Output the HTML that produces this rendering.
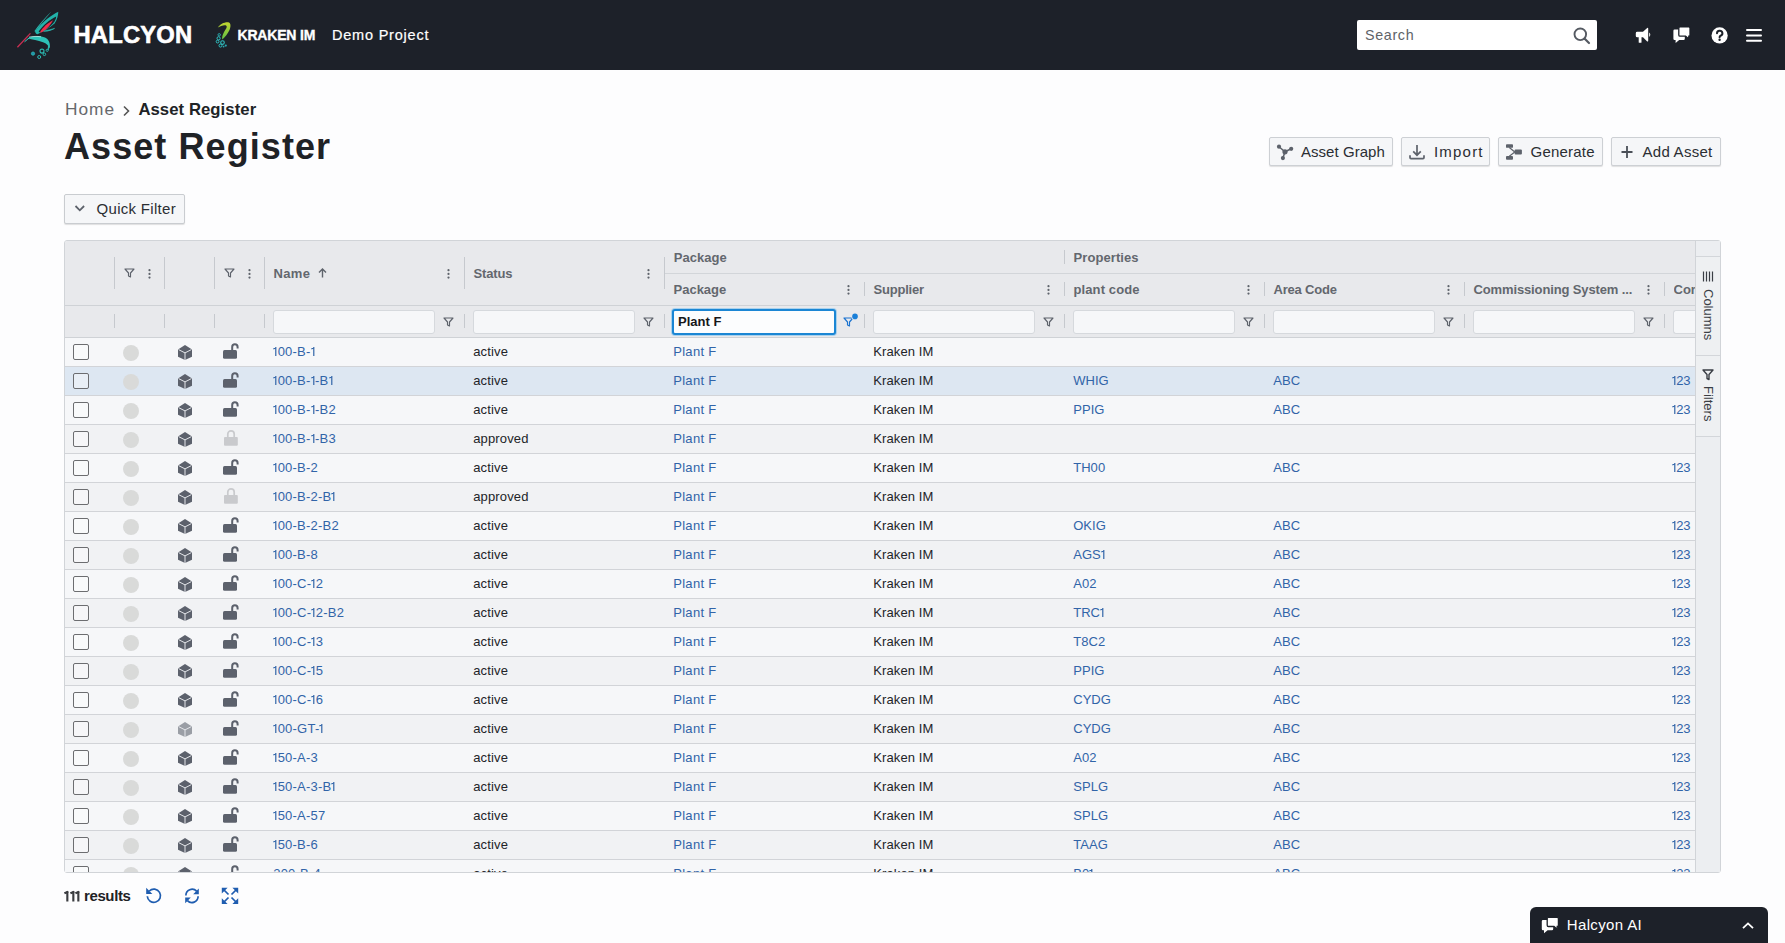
<!DOCTYPE html>
<html><head><meta charset="utf-8"><title>Asset Register</title>
<style>
html,body{margin:0;padding:0;}
body{width:1785px;height:943px;overflow:hidden;position:relative;background:#fdfdfe;font-family:"Liberation Sans", sans-serif;}
.r{position:absolute;display:block;}
.t{position:absolute;white-space:nowrap;}
svg.r{overflow:visible}
.o1{display:inline-block;height:0.7em;vertical-align:baseline;overflow:visible}
</style></head><body>
<div class="r" style="left:0px;top:0px;width:1785px;height:70px;background:#1d2129"></div>
<svg class="r" style="left:0px;top:0px;" width="70" height="70" viewBox="0 0 70 70">
<path d="M51.6 11.2 C46 17 39 24 34.3 31.2 L35.3 31.6 C39.5 25 46 18 51.6 11.2Z" fill="#2bb8b0"/>
<path d="M58.3 11.8 C52 14.5 42 22 35 31.5 C35.6 33.5 36.5 34.3 37.5 34.2 C44 31 50 27.5 54.5 23.5 C57 20 58.2 15.5 58.3 11.8Z" fill="#22b3aa"/>
<path d="M56.2 16.5 C50 19.5 43 25 38.6 31.6 C39.5 32.6 40.5 32.8 41.5 32.3 C46 29.6 50.5 26.5 53.4 23 C55 21 56 18.8 56.2 16.5Z" fill="#1d2129"/>
<path d="M53 20.2 C47.5 23 42.5 27.5 40 32.2 C41.2 32.6 42.2 32.3 43.2 31.6 C47.2 28.5 50.8 25 53 20.2Z" fill="#ee2f4b"/>
<path d="M54.6 28.4 C51 29.6 47 30.2 43.5 31.2 C47 31.4 51 30.6 54.6 28.4Z" fill="#2bb8b0" stroke="#2bb8b0" stroke-width="0.6"/>
<path d="M27.5 38.3 C33 35.8 40 35.5 45 37.6 C48.5 39.2 50.6 43 49.8 48.8 C48.6 45.5 46.5 43.5 43 42.2 C38 40.6 32 39.5 27.5 38.3Z" fill="#2ec2b8"/>
<path d="M29 37.2 C33 36.3 37 36.2 41 36.8" fill="none" stroke="#bff2ee" stroke-width="0.8"/>
<path d="M17.4 47.2 L30.4 33.4" stroke="#c72f52" stroke-width="1.3"/>
<path d="M24.5 41.8 L30 37.2" stroke="#3fc9c0" stroke-width="1"/>
<circle cx="33" cy="53.6" r="1.6" fill="#1f8fb0" stroke="#2bb8b0" stroke-width="0.9"/>
<circle cx="42" cy="51.1" r="2" fill="none" stroke="#2bb8b0" stroke-width="1.1"/>
<circle cx="44.4" cy="54.3" r="1.3" fill="none" stroke="#2bb8b0" stroke-width="1"/>
<circle cx="39.2" cy="57" r="1.5" fill="none" stroke="#2bb8b0" stroke-width="1"/>
<circle cx="47.2" cy="50.3" r="1.1" fill="none" stroke="#2bb8b0" stroke-width="0.9"/>
<path d="M48.6 46 L48.2 50" stroke="#2bb8b0" stroke-width="1.2"/>
</svg>
<div class="t" id="halcyon" style="left:73.50px;top:23.15px;font-size:23.8px;line-height:23.8px;font-weight:700;color:#ffffff;letter-spacing:0.167px;-webkit-text-stroke:0.6px #fff;">HALCYON</div>
<svg class="r" style="left:0px;top:0px;" width="240" height="60" viewBox="0 0 240 60">
<defs><linearGradient id="kg" x1="0" y1="0" x2="0" y2="1"><stop offset="0" stop-color="#c2d530"/><stop offset="1" stop-color="#5fbf45"/></linearGradient></defs>
<path d="M217.8 27.6 C220 24 225 21.6 229 22.4 C231 23.5 230.8 27 229.5 30 C228 33.5 225 37 222.3 39.5 C221.6 36.5 223.5 32.5 226.2 28.5 C227 27 227 25.5 225.5 25.2 C223 25 220 26 217.8 27.6Z" fill="url(#kg)"/>
<circle cx="219.2" cy="34.8" r="1.2" fill="none" stroke="#29b3b8" stroke-width="0.9"/>
<circle cx="218.6" cy="38.3" r="1.6" fill="none" stroke="#2fbfc0" stroke-width="1"/>
<circle cx="217.6" cy="41.6" r="1.4" fill="none" stroke="#2fbfc0" stroke-width="1"/>
<circle cx="222.5" cy="42.6" r="1.8" fill="none" stroke="#2fbfc0" stroke-width="1.1"/>
<circle cx="220.5" cy="45.6" r="1.5" fill="none" stroke="#2fbfc0" stroke-width="1"/>
<circle cx="225.8" cy="45.6" r="1.1" fill="#2aa7b0"/>
<circle cx="223.6" cy="46.6" r="0.9" fill="#2aa7b0"/>
</svg>
<div class="t" id="kraken" style="left:237.50px;top:28.05px;font-size:14px;line-height:14px;font-weight:700;color:#ffffff;letter-spacing:-0.188px;-webkit-text-stroke:0.35px #fff;">KRAKEN IM</div>
<div class="t" id="demo" style="left:332.00px;top:27.63px;font-size:14.5px;line-height:14.5px;font-weight:400;color:#ffffff;letter-spacing:0.791px;-webkit-text-stroke:0.2px #fff;">Demo Project</div>
<div class="r" style="left:1357px;top:20px;width:240px;height:30px;background:#fff;border-radius:2px"></div>
<div class="t" id="search" style="left:1365.00px;top:27.70px;font-size:14.3px;line-height:14.3px;font-weight:400;color:#606368;letter-spacing:0.660px;">Search</div>
<svg class="r" style="left:1573px;top:27px;" width="18" height="17" viewBox="0 0 18 17"><circle cx="7.3" cy="7.3" r="5.8" fill="none" stroke="#555a62" stroke-width="1.9"/><path d="M11.5 11.5 L16 16" stroke="#555a62" stroke-width="2.2" stroke-linecap="round"/></svg>
<svg class="r" style="left:0px;top:0px;" width="1785" height="70" viewBox="0 0 1785 70"><path d="M1637.2 31.8 H1643 L1647.2 27.9 Q1648.2 27.5 1648.2 28.6 V40.8 Q1648.2 41.9 1647.2 41.4 L1643 37.3 H1641.5 V42.2 Q1641.5 42.8 1640.9 42.8 H1639.3 Q1638.7 42.8 1638.7 42.2 V37.3 H1637.2 Q1635.8 37.3 1635.8 35.9 V33.2 Q1635.8 31.8 1637.2 31.8Z" fill="#fff"/>
<path d="M1649.2 32.6 Q1651.4 34.7 1649.2 36.9Z" fill="#fff"/>
<path d="M1674.6 29.6 H1683.6 Q1684.8 29.6 1684.8 30.8 V38.7 Q1684.8 39.9 1683.6 39.9 H1679.2 L1675.6 42.9 V39.9 H1674.6 Q1673.4 39.9 1673.4 38.7 V30.8 Q1673.4 29.6 1674.6 29.6Z" fill="#fff"/>
<path d="M1680 26.9 H1688.8 Q1690 26.9 1690 28.1 V34.9 Q1690 36.1 1688.8 36.1 V38.9 L1685.6 36.1 H1680 Q1678.8 36.1 1678.8 34.9 V28.1 Q1678.8 26.9 1680 26.9Z" fill="#fff" stroke="#1d2129" stroke-width="1.3"/>
</svg>
<svg class="r" style="left:1711px;top:27px;" width="18" height="17" viewBox="0 0 18 17"><circle cx="8.6" cy="8.4" r="8.1" fill="#fff"/><path d="M6 6.3 a2.7 2.5 0 1 1 3.6 2.4 c-0.8 0.35 -1 0.8 -1 1.6" fill="none" stroke="#1d2129" stroke-width="2" stroke-linecap="round"/><circle cx="8.6" cy="12.7" r="1.2" fill="#1d2129"/></svg>
<svg class="r" style="left:1745px;top:28px;" width="18" height="15" viewBox="0 0 18 15"><rect x="1" y="1" width="16" height="2" rx="1" fill="#fff"/><rect x="1" y="6.4" width="16" height="2" rx="1" fill="#fff"/><rect x="1" y="11.8" width="16" height="2" rx="1" fill="#fff"/></svg>
<div class="t" id="home" style="left:65.00px;top:101.26px;font-size:17.3px;line-height:17.3px;font-weight:400;color:#65686c;letter-spacing:1.000px;">Home</div>
<svg class="r" style="left:121px;top:105px;" width="10" height="12" viewBox="0 0 10 12"><path d="M3 1.5 L7.5 6 L3 10.5" fill="none" stroke="#555" stroke-width="1.6"/></svg>
<div class="t" id="bcar" style="left:138.40px;top:101.76px;font-size:16.7px;line-height:16.7px;font-weight:700;color:#202326;letter-spacing:0.069px;">Asset Register</div>
<div class="t" id="title" style="left:64.00px;top:128.83px;font-size:36px;line-height:36px;font-weight:700;color:#1f2226;letter-spacing:1.077px;">Asset Register</div>
<div class="r" style="left:1269px;top:137px;width:124px;height:29px;background:#f5f6f8;border:1px solid #cdd0d4;border-radius:2px;box-shadow:0 1px 1px rgba(0,0,0,0.12);box-sizing:border-box"></div>
<svg class="r" style="left:1277px;top:144px;" width="17" height="16" viewBox="0 0 17 16"><g transform="translate(-1277 -144)"><circle cx="1279" cy="146.7" r="2.1" fill="#5d626b"/><circle cx="1291.2" cy="148.8" r="2.1" fill="#5d626b"/><circle cx="1282.9" cy="158.1" r="2.1" fill="#5d626b"/><circle cx="1285" cy="151.8" r="2.6" fill="#5d626b"/><path d="M1279 146.7 L1285 151.8 L1291.2 148.8 M1285 151.8 L1282.9 158.1" fill="none" stroke="#5d626b" stroke-width="1.5"/></g></svg>
<div class="t" id="b1" style="left:1301.00px;top:144.30px;font-size:15px;line-height:15px;font-weight:400;color:#2b2e33;letter-spacing:0.040px;">Asset Graph</div>
<div class="r" style="left:1401px;top:137px;width:89px;height:29px;background:#f5f6f8;border:1px solid #cdd0d4;border-radius:2px;box-shadow:0 1px 1px rgba(0,0,0,0.12);box-sizing:border-box"></div>
<svg class="r" style="left:1409px;top:144px;" width="16" height="16" viewBox="0 0 16 16"><g transform="translate(-1409 -144)"><path d="M1417 145 V155.2 M1413.2 151.4 L1417 155.2 L1420.8 151.4" fill="none" stroke="#5d626b" stroke-width="1.7"/><path d="M1410 155.3 V157.6 Q1410 158.6 1411 158.6 H1423 Q1424 158.6 1424 157.6 V155.3" fill="none" stroke="#5d626b" stroke-width="1.7"/></g></svg>
<div class="t" id="b2" style="left:1434.00px;top:144.30px;font-size:15px;line-height:15px;font-weight:400;color:#2b2e33;letter-spacing:1.200px;">Import</div>
<div class="r" style="left:1498px;top:137px;width:105px;height:29px;background:#f5f6f8;border:1px solid #cdd0d4;border-radius:2px;box-shadow:0 1px 1px rgba(0,0,0,0.12);box-sizing:border-box"></div>
<svg class="r" style="left:1506px;top:144px;" width="16" height="16" viewBox="0 0 16 16"><g transform="translate(-1506 -144)"><rect x="1506" y="144.2" width="7" height="3.6" rx="0.9" fill="#5d626b"/><rect x="1506" y="155.9" width="7" height="3.8" rx="0.9" fill="#5d626b"/><rect x="1514.6" y="149.5" width="7.3" height="5.1" rx="1" fill="#5d626b"/><path d="M1509.3 147.5 L1514.8 152 L1509.3 156.3" fill="none" stroke="#5d626b" stroke-width="1.2"/></g></svg>
<div class="t" id="b3" style="left:1530.60px;top:144.30px;font-size:15px;line-height:15px;font-weight:400;color:#2b2e33;letter-spacing:0.200px;">Generate</div>
<div class="r" style="left:1611px;top:137px;width:110px;height:29px;background:#f5f6f8;border:1px solid #cdd0d4;border-radius:2px;box-shadow:0 1px 1px rgba(0,0,0,0.12);box-sizing:border-box"></div>
<svg class="r" style="left:1621px;top:144px;" width="12" height="16" viewBox="0 0 12 16"><path d="M6 2 V14 M0.5 8 H11.5" stroke="#4a4f57" stroke-width="1.8"/></svg>
<div class="t" id="b4" style="left:1642.60px;top:144.30px;font-size:15px;line-height:15px;font-weight:400;color:#2b2e33;letter-spacing:0.250px;">Add Asset</div>
<div class="r" style="left:64px;top:194px;width:121px;height:30px;background:#f5f6f8;border:1px solid #c9ccd0;border-radius:2px;box-shadow:0 1px 1px rgba(0,0,0,0.12);box-sizing:border-box"></div>
<svg class="r" style="left:74px;top:204px;" width="12" height="9" viewBox="0 0 12 9"><path d="M1.5 2 L5.8 6.3 L10.1 2" fill="none" stroke="#5d626b" stroke-width="1.8"/></svg>
<div class="t" id="qf" style="left:96.60px;top:200.90px;font-size:15px;line-height:15px;font-weight:400;color:#2b2e33;letter-spacing:0.291px;">Quick Filter</div>
<div class="r" style="left:64px;top:240px;width:1657px;height:633px;background:#f4f5f7;border:1px solid #d1d4d8;border-radius:3px;box-sizing:border-box"></div>
<div class="r" style="left:65px;top:241px;width:1630px;height:96px;background:#e8e9ec;border-radius:2px 0 0 0"></div>
<div class="r" style="left:65px;top:305px;width:1630px;height:1px;background:#cfd2d6"></div>
<div class="r" style="left:65px;top:337px;width:1630px;height:1px;background:#cfd2d6"></div>
<div class="r" style="left:664px;top:273px;width:1031px;height:1px;background:#d2d5d9"></div>
<div class="r" style="left:114px;top:257px;width:1px;height:32px;background:#c6c9ce"></div>
<div class="r" style="left:164px;top:257px;width:1px;height:32px;background:#c6c9ce"></div>
<div class="r" style="left:214px;top:257px;width:1px;height:32px;background:#c6c9ce"></div>
<div class="r" style="left:264px;top:257px;width:1px;height:32px;background:#c6c9ce"></div>
<div class="r" style="left:464px;top:257px;width:1px;height:32px;background:#c6c9ce"></div>
<div class="r" style="left:664px;top:257px;width:1px;height:32px;background:#c6c9ce"></div>
<div class="r" style="left:1064px;top:250px;width:1px;height:14px;background:#c6c9ce"></div>
<div class="r" style="left:864px;top:282px;width:1px;height:14px;background:#c6c9ce"></div>
<div class="r" style="left:1064px;top:282px;width:1px;height:14px;background:#c6c9ce"></div>
<div class="r" style="left:1264px;top:282px;width:1px;height:14px;background:#c6c9ce"></div>
<div class="r" style="left:1464px;top:282px;width:1px;height:14px;background:#c6c9ce"></div>
<div class="r" style="left:1664px;top:282px;width:1px;height:14px;background:#c6c9ce"></div>
<div class="r" style="left:114px;top:314px;width:1px;height:14px;background:#c6c9ce"></div>
<div class="r" style="left:164px;top:314px;width:1px;height:14px;background:#c6c9ce"></div>
<div class="r" style="left:214px;top:314px;width:1px;height:14px;background:#c6c9ce"></div>
<div class="r" style="left:264px;top:314px;width:1px;height:14px;background:#c6c9ce"></div>
<div class="r" style="left:464px;top:314px;width:1px;height:14px;background:#c6c9ce"></div>
<div class="r" style="left:664px;top:314px;width:1px;height:14px;background:#c6c9ce"></div>
<div class="r" style="left:864px;top:314px;width:1px;height:14px;background:#c6c9ce"></div>
<div class="r" style="left:1064px;top:314px;width:1px;height:14px;background:#c6c9ce"></div>
<div class="r" style="left:1264px;top:314px;width:1px;height:14px;background:#c6c9ce"></div>
<div class="r" style="left:1464px;top:314px;width:1px;height:14px;background:#c6c9ce"></div>
<div class="r" style="left:1664px;top:314px;width:1px;height:14px;background:#c6c9ce"></div>
<svg class="r" style="left:123.5px;top:267.5px;overflow:visible" width="11" height="10" viewBox="0 0 11 10"><path d="M1 1 H10 L6.5 5 V9 L4.5 8 V5 Z" fill="none" stroke="#5d626b" stroke-width="1.15" stroke-linejoin="round"/></svg>
<svg class="r" style="left:147.8px;top:268.5px" width="3" height="10" viewBox="0 0 3 10"><circle cx="1.5" cy="1.2" r="1.1" fill="#5e636b"/><circle cx="1.5" cy="4.9" r="1.1" fill="#5e636b"/><circle cx="1.5" cy="8.6" r="1.1" fill="#5e636b"/></svg>
<svg class="r" style="left:223.5px;top:267.5px;overflow:visible" width="11" height="10" viewBox="0 0 11 10"><path d="M1 1 H10 L6.5 5 V9 L4.5 8 V5 Z" fill="none" stroke="#5d626b" stroke-width="1.15" stroke-linejoin="round"/></svg>
<svg class="r" style="left:247.8px;top:268.5px" width="3" height="10" viewBox="0 0 3 10"><circle cx="1.5" cy="1.2" r="1.1" fill="#5e636b"/><circle cx="1.5" cy="4.9" r="1.1" fill="#5e636b"/><circle cx="1.5" cy="8.6" r="1.1" fill="#5e636b"/></svg>
<div class="t" id="hname" style="left:273.50px;top:266.80px;font-size:13px;line-height:13px;font-weight:700;color:#63676e;letter-spacing:0.367px;">Name</div>
<svg class="r" style="left:317.5px;top:268px;" width="9" height="10" viewBox="0 0 9 10"><path d="M4.5 9.5 V1.2 M1 4.5 L4.5 1 L8 4.5" fill="none" stroke="#5e636b" stroke-width="1.4"/></svg>
<svg class="r" style="left:447.2px;top:268.5px" width="3" height="10" viewBox="0 0 3 10"><circle cx="1.5" cy="1.2" r="1.1" fill="#5e636b"/><circle cx="1.5" cy="4.9" r="1.1" fill="#5e636b"/><circle cx="1.5" cy="8.6" r="1.1" fill="#5e636b"/></svg>
<div class="t" id="hstatus" style="left:473.40px;top:266.70px;font-size:13px;line-height:13px;font-weight:700;color:#63676e;letter-spacing:-0.120px;">Status</div>
<svg class="r" style="left:647.4px;top:268.5px" width="3" height="10" viewBox="0 0 3 10"><circle cx="1.5" cy="1.2" r="1.1" fill="#5e636b"/><circle cx="1.5" cy="4.9" r="1.1" fill="#5e636b"/><circle cx="1.5" cy="8.6" r="1.1" fill="#5e636b"/></svg>
<div class="t" id="gpack" style="left:673.70px;top:251.30px;font-size:13px;line-height:13px;font-weight:700;color:#63676e;letter-spacing:0.033px;">Package</div>
<div class="t" id="gprop" style="left:1073.50px;top:251.30px;font-size:13px;line-height:13px;font-weight:700;color:#63676e;letter-spacing:0.089px;">Properties</div>
<div class="t" id="cpack" style="left:673.50px;top:282.80px;font-size:13px;line-height:13px;font-weight:700;color:#63676e;letter-spacing:0.000px;">Package</div>
<svg class="r" style="left:847.4px;top:285.3px" width="3" height="10" viewBox="0 0 3 10"><circle cx="1.5" cy="1.2" r="1.1" fill="#5e636b"/><circle cx="1.5" cy="4.9" r="1.1" fill="#5e636b"/><circle cx="1.5" cy="8.6" r="1.1" fill="#5e636b"/></svg>
<div class="t" id="csupp" style="left:873.50px;top:282.80px;font-size:13px;line-height:13px;font-weight:700;color:#63676e;letter-spacing:-0.200px;">Supplier</div>
<svg class="r" style="left:1047.4px;top:285.3px" width="3" height="10" viewBox="0 0 3 10"><circle cx="1.5" cy="1.2" r="1.1" fill="#5e636b"/><circle cx="1.5" cy="4.9" r="1.1" fill="#5e636b"/><circle cx="1.5" cy="8.6" r="1.1" fill="#5e636b"/></svg>
<div class="t" id="cplant" style="left:1073.50px;top:282.80px;font-size:13px;line-height:13px;font-weight:700;color:#63676e;letter-spacing:0.111px;">plant code</div>
<svg class="r" style="left:1247.4px;top:285.3px" width="3" height="10" viewBox="0 0 3 10"><circle cx="1.5" cy="1.2" r="1.1" fill="#5e636b"/><circle cx="1.5" cy="4.9" r="1.1" fill="#5e636b"/><circle cx="1.5" cy="8.6" r="1.1" fill="#5e636b"/></svg>
<div class="t" id="carea" style="left:1273.50px;top:282.80px;font-size:13px;line-height:13px;font-weight:700;color:#63676e;letter-spacing:-0.188px;">Area Code</div>
<svg class="r" style="left:1447.4px;top:285.3px" width="3" height="10" viewBox="0 0 3 10"><circle cx="1.5" cy="1.2" r="1.1" fill="#5e636b"/><circle cx="1.5" cy="4.9" r="1.1" fill="#5e636b"/><circle cx="1.5" cy="8.6" r="1.1" fill="#5e636b"/></svg>
<div class="t" id="ccomm" style="left:1473.50px;top:282.80px;font-size:13px;line-height:13px;font-weight:700;color:#63676e;letter-spacing:-0.130px;">Commissioning System ...</div>
<svg class="r" style="left:1647.4px;top:285.3px" width="3" height="10" viewBox="0 0 3 10"><circle cx="1.5" cy="1.2" r="1.1" fill="#5e636b"/><circle cx="1.5" cy="4.9" r="1.1" fill="#5e636b"/><circle cx="1.5" cy="8.6" r="1.1" fill="#5e636b"/></svg>
<div class="r" style="left:1673.5px;top:282.80px;width:21.5px;height:16px;overflow:hidden"><div class="t" style="left:0;top:0;font-size:13px;line-height:13px;font-weight:700;color:#63676e">Commissioning</div></div>
<div class="r" style="left:273px;top:310px;width:162px;height:24px;background:#f6f7f9;border:1px solid #d6d9dd;border-radius:3px;box-sizing:border-box"></div>
<svg class="r" style="left:443px;top:316.5px;overflow:visible" width="11" height="10" viewBox="0 0 11 10"><path d="M1 1 H10 L6.5 5 V9 L4.5 8 V5 Z" fill="none" stroke="#5d626b" stroke-width="1.15" stroke-linejoin="round"/></svg>
<div class="r" style="left:473px;top:310px;width:162px;height:24px;background:#f6f7f9;border:1px solid #d6d9dd;border-radius:3px;box-sizing:border-box"></div>
<svg class="r" style="left:643px;top:316.5px;overflow:visible" width="11" height="10" viewBox="0 0 11 10"><path d="M1 1 H10 L6.5 5 V9 L4.5 8 V5 Z" fill="none" stroke="#5d626b" stroke-width="1.15" stroke-linejoin="round"/></svg>
<div class="r" style="left:672px;top:309px;width:164px;height:26px;background:#fcfdfe;border:2px solid #1b86d4;border-radius:3px;box-sizing:border-box;box-shadow:0 0 0 1px rgba(90,180,240,0.45)"></div>
<div class="t" id="pf" style="left:678.00px;top:314.80px;font-size:13px;line-height:13px;font-weight:700;color:#161719;letter-spacing:0.000px;">Plant F</div>
<svg class="r" style="left:843px;top:316.5px;overflow:visible" width="11" height="10" viewBox="0 0 11 10"><path d="M1 1 H10 L6.5 5 V9 L4.5 8 V5 Z" fill="none" stroke="#1a73d0" stroke-width="1.15" stroke-linejoin="round"/><circle cx="12" cy="-0.6" r="3.6" fill="#e8e9ec"/><circle cx="12" cy="-0.6" r="2.8" fill="#1a7fd8"/></svg>
<div class="r" style="left:873px;top:310px;width:162px;height:24px;background:#f6f7f9;border:1px solid #d6d9dd;border-radius:3px;box-sizing:border-box"></div>
<svg class="r" style="left:1043px;top:316.5px;overflow:visible" width="11" height="10" viewBox="0 0 11 10"><path d="M1 1 H10 L6.5 5 V9 L4.5 8 V5 Z" fill="none" stroke="#5d626b" stroke-width="1.15" stroke-linejoin="round"/></svg>
<div class="r" style="left:1073px;top:310px;width:162px;height:24px;background:#f6f7f9;border:1px solid #d6d9dd;border-radius:3px;box-sizing:border-box"></div>
<svg class="r" style="left:1243px;top:316.5px;overflow:visible" width="11" height="10" viewBox="0 0 11 10"><path d="M1 1 H10 L6.5 5 V9 L4.5 8 V5 Z" fill="none" stroke="#5d626b" stroke-width="1.15" stroke-linejoin="round"/></svg>
<div class="r" style="left:1273px;top:310px;width:162px;height:24px;background:#f6f7f9;border:1px solid #d6d9dd;border-radius:3px;box-sizing:border-box"></div>
<svg class="r" style="left:1443px;top:316.5px;overflow:visible" width="11" height="10" viewBox="0 0 11 10"><path d="M1 1 H10 L6.5 5 V9 L4.5 8 V5 Z" fill="none" stroke="#5d626b" stroke-width="1.15" stroke-linejoin="round"/></svg>
<div class="r" style="left:1473px;top:310px;width:162px;height:24px;background:#f6f7f9;border:1px solid #d6d9dd;border-radius:3px;box-sizing:border-box"></div>
<svg class="r" style="left:1643px;top:316.5px;overflow:visible" width="11" height="10" viewBox="0 0 11 10"><path d="M1 1 H10 L6.5 5 V9 L4.5 8 V5 Z" fill="none" stroke="#5d626b" stroke-width="1.15" stroke-linejoin="round"/></svg>
<div class="r" style="left:1673px;top:310px;width:22px;height:24px;background:#f6f7f9;border:1px solid #d6d9dd;border-right:none;border-radius:3px 0 0 3px;box-sizing:border-box"></div>
<div class="r" style="left:65px;top:338px;width:1630px;height:534px;overflow:hidden">
<div class="r" style="left:0;top:0px;width:1630px;height:28px;background:#f6f7f9"></div>
<div class="r" style="left:0;top:28px;width:1630px;height:1px;background:#d2d4d8"></div>
<div class="r" style="left:8px;top:6px;width:16px;height:16px;border:1.5px solid #6c6d70;border-radius:2px;background:rgba(255,255,255,0.35);box-sizing:border-box"></div>
<div class="r" style="left:58px;top:6.7px;width:16px;height:16px;border-radius:50%;background:#d9dad9"></div>
<svg class="r" style="left:113px;top:6.8px" width="14" height="15" viewBox="0 0 14 15"><path d="M7 0 L14 4.5 V11.8 L7 15 L0 11.8 V4.5 Z" fill="#5c616c"/><path d="M0.6 4.6 L7 7.9 L13.4 4.6 M7 7.9 V15" fill="none" stroke="#e4e6ea" stroke-width="1"/></svg>
<svg class="r" style="left:158px;top:5px" width="16" height="16" viewBox="0 0 16 16"><path d="M9.2 7.5 V3.9 a2.7 2.7 0 0 1 5.4 0 V5.4" fill="none" stroke="#5c616c" stroke-width="2"/><rect x="0" y="7" width="14" height="8.8" rx="1.5" fill="#5c616c"/></svg>
<div class="t" id="r0n" style="left:208.20px;top:6.60px;font-size:13px;line-height:13px;font-weight:400;color:#3164a8;letter-spacing:0.220px;"><svg class="o1" viewBox="0 0 4.5 9.1" style="width:0.346em"><path d="M0.35 2.0 L3.40 0.55 M2.80 0 V9.1" stroke="currentColor" stroke-width="1.2" fill="none"/></svg>00-B-<svg class="o1" viewBox="0 0 4.5 9.1" style="width:0.346em"><path d="M0.35 2.0 L3.40 0.55 M2.80 0 V9.1" stroke="currentColor" stroke-width="1.2" fill="none"/></svg></div>
<div class="t" id="r0s" style="left:408.20px;top:6.60px;font-size:13px;line-height:13px;font-weight:400;color:#222428;letter-spacing:0.150px;">active</div>
<div class="t" id="r0p" style="left:608.20px;top:6.60px;font-size:13px;line-height:13px;font-weight:400;color:#3164a8;letter-spacing:0.300px;">Plant F</div>
<div class="t" id="r0u" style="left:808.20px;top:6.60px;font-size:13px;line-height:13px;font-weight:400;color:#222428;letter-spacing:0.120px;">Kraken IM</div>
<div class="r" style="left:0;top:29px;width:1630px;height:28px;background:#dde7f2"></div>
<div class="r" style="left:0;top:57px;width:1630px;height:1px;background:#d2d4d8"></div>
<div class="r" style="left:8px;top:35px;width:16px;height:16px;border:1.5px solid #6c6d70;border-radius:2px;background:rgba(255,255,255,0.35);box-sizing:border-box"></div>
<div class="r" style="left:58px;top:35.7px;width:16px;height:16px;border-radius:50%;background:#d9dad9"></div>
<svg class="r" style="left:113px;top:35.8px" width="14" height="15" viewBox="0 0 14 15"><path d="M7 0 L14 4.5 V11.8 L7 15 L0 11.8 V4.5 Z" fill="#5c616c"/><path d="M0.6 4.6 L7 7.9 L13.4 4.6 M7 7.9 V15" fill="none" stroke="#e4e6ea" stroke-width="1"/></svg>
<svg class="r" style="left:158px;top:34px" width="16" height="16" viewBox="0 0 16 16"><path d="M9.2 7.5 V3.9 a2.7 2.7 0 0 1 5.4 0 V5.4" fill="none" stroke="#5c616c" stroke-width="2"/><rect x="0" y="7" width="14" height="8.8" rx="1.5" fill="#5c616c"/></svg>
<div class="t" id="r1n" style="left:208.20px;top:35.60px;font-size:13px;line-height:13px;font-weight:400;color:#3164a8;letter-spacing:0.220px;"><svg class="o1" viewBox="0 0 4.5 9.1" style="width:0.346em"><path d="M0.35 2.0 L3.40 0.55 M2.80 0 V9.1" stroke="currentColor" stroke-width="1.2" fill="none"/></svg>00-B-<svg class="o1" viewBox="0 0 4.5 9.1" style="width:0.346em"><path d="M0.35 2.0 L3.40 0.55 M2.80 0 V9.1" stroke="currentColor" stroke-width="1.2" fill="none"/></svg>-B<svg class="o1" viewBox="0 0 4.5 9.1" style="width:0.346em"><path d="M0.35 2.0 L3.40 0.55 M2.80 0 V9.1" stroke="currentColor" stroke-width="1.2" fill="none"/></svg></div>
<div class="t" id="r1s" style="left:408.20px;top:35.60px;font-size:13px;line-height:13px;font-weight:400;color:#222428;letter-spacing:0.150px;">active</div>
<div class="t" id="r1p" style="left:608.20px;top:35.60px;font-size:13px;line-height:13px;font-weight:400;color:#3164a8;letter-spacing:0.300px;">Plant F</div>
<div class="t" id="r1u" style="left:808.20px;top:35.60px;font-size:13px;line-height:13px;font-weight:400;color:#222428;letter-spacing:0.120px;">Kraken IM</div>
<div class="t" id="r1c" style="left:1008.20px;top:35.60px;font-size:13px;line-height:13px;font-weight:400;color:#3164a8;letter-spacing:0.050px;">WHIG</div>
<div class="t" id="r1a" style="left:1208.20px;top:35.60px;font-size:13px;line-height:13px;font-weight:400;color:#3164a8;letter-spacing:0.050px;">ABC</div>
<div class="t" style="left:1535px;top:35.60px;width:90.6px;text-align:right;font-size:13px;line-height:13px;color:#3164a8"><svg class="o1" viewBox="0 0 4.5 9.1" style="width:0.346em"><path d="M0.35 2.0 L3.40 0.55 M2.80 0 V9.1" stroke="currentColor" stroke-width="1.2" fill="none"/></svg>23</div>
<div class="r" style="left:0;top:58px;width:1630px;height:28px;background:#f6f7f9"></div>
<div class="r" style="left:0;top:86px;width:1630px;height:1px;background:#d2d4d8"></div>
<div class="r" style="left:8px;top:64px;width:16px;height:16px;border:1.5px solid #6c6d70;border-radius:2px;background:rgba(255,255,255,0.35);box-sizing:border-box"></div>
<div class="r" style="left:58px;top:64.7px;width:16px;height:16px;border-radius:50%;background:#d9dad9"></div>
<svg class="r" style="left:113px;top:64.8px" width="14" height="15" viewBox="0 0 14 15"><path d="M7 0 L14 4.5 V11.8 L7 15 L0 11.8 V4.5 Z" fill="#5c616c"/><path d="M0.6 4.6 L7 7.9 L13.4 4.6 M7 7.9 V15" fill="none" stroke="#e4e6ea" stroke-width="1"/></svg>
<svg class="r" style="left:158px;top:63px" width="16" height="16" viewBox="0 0 16 16"><path d="M9.2 7.5 V3.9 a2.7 2.7 0 0 1 5.4 0 V5.4" fill="none" stroke="#5c616c" stroke-width="2"/><rect x="0" y="7" width="14" height="8.8" rx="1.5" fill="#5c616c"/></svg>
<div class="t" id="r2n" style="left:208.20px;top:64.60px;font-size:13px;line-height:13px;font-weight:400;color:#3164a8;letter-spacing:0.220px;"><svg class="o1" viewBox="0 0 4.5 9.1" style="width:0.346em"><path d="M0.35 2.0 L3.40 0.55 M2.80 0 V9.1" stroke="currentColor" stroke-width="1.2" fill="none"/></svg>00-B-<svg class="o1" viewBox="0 0 4.5 9.1" style="width:0.346em"><path d="M0.35 2.0 L3.40 0.55 M2.80 0 V9.1" stroke="currentColor" stroke-width="1.2" fill="none"/></svg>-B2</div>
<div class="t" id="r2s" style="left:408.20px;top:64.60px;font-size:13px;line-height:13px;font-weight:400;color:#222428;letter-spacing:0.150px;">active</div>
<div class="t" id="r2p" style="left:608.20px;top:64.60px;font-size:13px;line-height:13px;font-weight:400;color:#3164a8;letter-spacing:0.300px;">Plant F</div>
<div class="t" id="r2u" style="left:808.20px;top:64.60px;font-size:13px;line-height:13px;font-weight:400;color:#222428;letter-spacing:0.120px;">Kraken IM</div>
<div class="t" id="r2c" style="left:1008.20px;top:64.60px;font-size:13px;line-height:13px;font-weight:400;color:#3164a8;letter-spacing:0.050px;">PPIG</div>
<div class="t" id="r2a" style="left:1208.20px;top:64.60px;font-size:13px;line-height:13px;font-weight:400;color:#3164a8;letter-spacing:0.050px;">ABC</div>
<div class="t" style="left:1535px;top:64.60px;width:90.6px;text-align:right;font-size:13px;line-height:13px;color:#3164a8"><svg class="o1" viewBox="0 0 4.5 9.1" style="width:0.346em"><path d="M0.35 2.0 L3.40 0.55 M2.80 0 V9.1" stroke="currentColor" stroke-width="1.2" fill="none"/></svg>23</div>
<div class="r" style="left:0;top:87px;width:1630px;height:28px;background:#f1f2f4"></div>
<div class="r" style="left:0;top:115px;width:1630px;height:1px;background:#d2d4d8"></div>
<div class="r" style="left:8px;top:93px;width:16px;height:16px;border:1.5px solid #6c6d70;border-radius:2px;background:rgba(255,255,255,0.35);box-sizing:border-box"></div>
<div class="r" style="left:58px;top:93.7px;width:16px;height:16px;border-radius:50%;background:#d9dad9"></div>
<svg class="r" style="left:113px;top:93.8px" width="14" height="15" viewBox="0 0 14 15"><path d="M7 0 L14 4.5 V11.8 L7 15 L0 11.8 V4.5 Z" fill="#5c616c"/><path d="M0.6 4.6 L7 7.9 L13.4 4.6 M7 7.9 V15" fill="none" stroke="#e4e6ea" stroke-width="1"/></svg>
<svg class="r" style="left:158px;top:92px" width="16" height="16" viewBox="0 0 16 16"><path d="M4.8 8 V4.05 a3.2 3.2 0 0 1 6.4 0 V8" fill="none" stroke="#c9cacd" stroke-width="1.7"/><rect x="1" y="7.1" width="13.8" height="8.7" rx="1" fill="#c9cacd"/></svg>
<div class="t" id="r3n" style="left:208.20px;top:93.60px;font-size:13px;line-height:13px;font-weight:400;color:#3164a8;letter-spacing:0.220px;"><svg class="o1" viewBox="0 0 4.5 9.1" style="width:0.346em"><path d="M0.35 2.0 L3.40 0.55 M2.80 0 V9.1" stroke="currentColor" stroke-width="1.2" fill="none"/></svg>00-B-<svg class="o1" viewBox="0 0 4.5 9.1" style="width:0.346em"><path d="M0.35 2.0 L3.40 0.55 M2.80 0 V9.1" stroke="currentColor" stroke-width="1.2" fill="none"/></svg>-B3</div>
<div class="t" id="r3s" style="left:408.20px;top:93.60px;font-size:13px;line-height:13px;font-weight:400;color:#222428;letter-spacing:0.150px;">approved</div>
<div class="t" id="r3p" style="left:608.20px;top:93.60px;font-size:13px;line-height:13px;font-weight:400;color:#3164a8;letter-spacing:0.300px;">Plant F</div>
<div class="t" id="r3u" style="left:808.20px;top:93.60px;font-size:13px;line-height:13px;font-weight:400;color:#222428;letter-spacing:0.120px;">Kraken IM</div>
<div class="r" style="left:0;top:116px;width:1630px;height:28px;background:#f6f7f9"></div>
<div class="r" style="left:0;top:144px;width:1630px;height:1px;background:#d2d4d8"></div>
<div class="r" style="left:8px;top:122px;width:16px;height:16px;border:1.5px solid #6c6d70;border-radius:2px;background:rgba(255,255,255,0.35);box-sizing:border-box"></div>
<div class="r" style="left:58px;top:122.7px;width:16px;height:16px;border-radius:50%;background:#d9dad9"></div>
<svg class="r" style="left:113px;top:122.8px" width="14" height="15" viewBox="0 0 14 15"><path d="M7 0 L14 4.5 V11.8 L7 15 L0 11.8 V4.5 Z" fill="#5c616c"/><path d="M0.6 4.6 L7 7.9 L13.4 4.6 M7 7.9 V15" fill="none" stroke="#e4e6ea" stroke-width="1"/></svg>
<svg class="r" style="left:158px;top:121px" width="16" height="16" viewBox="0 0 16 16"><path d="M9.2 7.5 V3.9 a2.7 2.7 0 0 1 5.4 0 V5.4" fill="none" stroke="#5c616c" stroke-width="2"/><rect x="0" y="7" width="14" height="8.8" rx="1.5" fill="#5c616c"/></svg>
<div class="t" id="r4n" style="left:208.20px;top:122.60px;font-size:13px;line-height:13px;font-weight:400;color:#3164a8;letter-spacing:0.220px;"><svg class="o1" viewBox="0 0 4.5 9.1" style="width:0.346em"><path d="M0.35 2.0 L3.40 0.55 M2.80 0 V9.1" stroke="currentColor" stroke-width="1.2" fill="none"/></svg>00-B-2</div>
<div class="t" id="r4s" style="left:408.20px;top:122.60px;font-size:13px;line-height:13px;font-weight:400;color:#222428;letter-spacing:0.150px;">active</div>
<div class="t" id="r4p" style="left:608.20px;top:122.60px;font-size:13px;line-height:13px;font-weight:400;color:#3164a8;letter-spacing:0.300px;">Plant F</div>
<div class="t" id="r4u" style="left:808.20px;top:122.60px;font-size:13px;line-height:13px;font-weight:400;color:#222428;letter-spacing:0.120px;">Kraken IM</div>
<div class="t" id="r4c" style="left:1008.20px;top:122.60px;font-size:13px;line-height:13px;font-weight:400;color:#3164a8;letter-spacing:0.050px;">TH00</div>
<div class="t" id="r4a" style="left:1208.20px;top:122.60px;font-size:13px;line-height:13px;font-weight:400;color:#3164a8;letter-spacing:0.050px;">ABC</div>
<div class="t" style="left:1535px;top:122.60px;width:90.6px;text-align:right;font-size:13px;line-height:13px;color:#3164a8"><svg class="o1" viewBox="0 0 4.5 9.1" style="width:0.346em"><path d="M0.35 2.0 L3.40 0.55 M2.80 0 V9.1" stroke="currentColor" stroke-width="1.2" fill="none"/></svg>23</div>
<div class="r" style="left:0;top:145px;width:1630px;height:28px;background:#f1f2f4"></div>
<div class="r" style="left:0;top:173px;width:1630px;height:1px;background:#d2d4d8"></div>
<div class="r" style="left:8px;top:151px;width:16px;height:16px;border:1.5px solid #6c6d70;border-radius:2px;background:rgba(255,255,255,0.35);box-sizing:border-box"></div>
<div class="r" style="left:58px;top:151.7px;width:16px;height:16px;border-radius:50%;background:#d9dad9"></div>
<svg class="r" style="left:113px;top:151.8px" width="14" height="15" viewBox="0 0 14 15"><path d="M7 0 L14 4.5 V11.8 L7 15 L0 11.8 V4.5 Z" fill="#5c616c"/><path d="M0.6 4.6 L7 7.9 L13.4 4.6 M7 7.9 V15" fill="none" stroke="#e4e6ea" stroke-width="1"/></svg>
<svg class="r" style="left:158px;top:150px" width="16" height="16" viewBox="0 0 16 16"><path d="M4.8 8 V4.05 a3.2 3.2 0 0 1 6.4 0 V8" fill="none" stroke="#c9cacd" stroke-width="1.7"/><rect x="1" y="7.1" width="13.8" height="8.7" rx="1" fill="#c9cacd"/></svg>
<div class="t" id="r5n" style="left:208.20px;top:151.60px;font-size:13px;line-height:13px;font-weight:400;color:#3164a8;letter-spacing:0.220px;"><svg class="o1" viewBox="0 0 4.5 9.1" style="width:0.346em"><path d="M0.35 2.0 L3.40 0.55 M2.80 0 V9.1" stroke="currentColor" stroke-width="1.2" fill="none"/></svg>00-B-2-B<svg class="o1" viewBox="0 0 4.5 9.1" style="width:0.346em"><path d="M0.35 2.0 L3.40 0.55 M2.80 0 V9.1" stroke="currentColor" stroke-width="1.2" fill="none"/></svg></div>
<div class="t" id="r5s" style="left:408.20px;top:151.60px;font-size:13px;line-height:13px;font-weight:400;color:#222428;letter-spacing:0.150px;">approved</div>
<div class="t" id="r5p" style="left:608.20px;top:151.60px;font-size:13px;line-height:13px;font-weight:400;color:#3164a8;letter-spacing:0.300px;">Plant F</div>
<div class="t" id="r5u" style="left:808.20px;top:151.60px;font-size:13px;line-height:13px;font-weight:400;color:#222428;letter-spacing:0.120px;">Kraken IM</div>
<div class="r" style="left:0;top:174px;width:1630px;height:28px;background:#f6f7f9"></div>
<div class="r" style="left:0;top:202px;width:1630px;height:1px;background:#d2d4d8"></div>
<div class="r" style="left:8px;top:180px;width:16px;height:16px;border:1.5px solid #6c6d70;border-radius:2px;background:rgba(255,255,255,0.35);box-sizing:border-box"></div>
<div class="r" style="left:58px;top:180.7px;width:16px;height:16px;border-radius:50%;background:#d9dad9"></div>
<svg class="r" style="left:113px;top:180.8px" width="14" height="15" viewBox="0 0 14 15"><path d="M7 0 L14 4.5 V11.8 L7 15 L0 11.8 V4.5 Z" fill="#5c616c"/><path d="M0.6 4.6 L7 7.9 L13.4 4.6 M7 7.9 V15" fill="none" stroke="#e4e6ea" stroke-width="1"/></svg>
<svg class="r" style="left:158px;top:179px" width="16" height="16" viewBox="0 0 16 16"><path d="M9.2 7.5 V3.9 a2.7 2.7 0 0 1 5.4 0 V5.4" fill="none" stroke="#5c616c" stroke-width="2"/><rect x="0" y="7" width="14" height="8.8" rx="1.5" fill="#5c616c"/></svg>
<div class="t" id="r6n" style="left:208.20px;top:180.60px;font-size:13px;line-height:13px;font-weight:400;color:#3164a8;letter-spacing:0.220px;"><svg class="o1" viewBox="0 0 4.5 9.1" style="width:0.346em"><path d="M0.35 2.0 L3.40 0.55 M2.80 0 V9.1" stroke="currentColor" stroke-width="1.2" fill="none"/></svg>00-B-2-B2</div>
<div class="t" id="r6s" style="left:408.20px;top:180.60px;font-size:13px;line-height:13px;font-weight:400;color:#222428;letter-spacing:0.150px;">active</div>
<div class="t" id="r6p" style="left:608.20px;top:180.60px;font-size:13px;line-height:13px;font-weight:400;color:#3164a8;letter-spacing:0.300px;">Plant F</div>
<div class="t" id="r6u" style="left:808.20px;top:180.60px;font-size:13px;line-height:13px;font-weight:400;color:#222428;letter-spacing:0.120px;">Kraken IM</div>
<div class="t" id="r6c" style="left:1008.20px;top:180.60px;font-size:13px;line-height:13px;font-weight:400;color:#3164a8;letter-spacing:0.050px;">OKIG</div>
<div class="t" id="r6a" style="left:1208.20px;top:180.60px;font-size:13px;line-height:13px;font-weight:400;color:#3164a8;letter-spacing:0.050px;">ABC</div>
<div class="t" style="left:1535px;top:180.60px;width:90.6px;text-align:right;font-size:13px;line-height:13px;color:#3164a8"><svg class="o1" viewBox="0 0 4.5 9.1" style="width:0.346em"><path d="M0.35 2.0 L3.40 0.55 M2.80 0 V9.1" stroke="currentColor" stroke-width="1.2" fill="none"/></svg>23</div>
<div class="r" style="left:0;top:203px;width:1630px;height:28px;background:#f1f2f4"></div>
<div class="r" style="left:0;top:231px;width:1630px;height:1px;background:#d2d4d8"></div>
<div class="r" style="left:8px;top:209px;width:16px;height:16px;border:1.5px solid #6c6d70;border-radius:2px;background:rgba(255,255,255,0.35);box-sizing:border-box"></div>
<div class="r" style="left:58px;top:209.7px;width:16px;height:16px;border-radius:50%;background:#d9dad9"></div>
<svg class="r" style="left:113px;top:209.8px" width="14" height="15" viewBox="0 0 14 15"><path d="M7 0 L14 4.5 V11.8 L7 15 L0 11.8 V4.5 Z" fill="#5c616c"/><path d="M0.6 4.6 L7 7.9 L13.4 4.6 M7 7.9 V15" fill="none" stroke="#e4e6ea" stroke-width="1"/></svg>
<svg class="r" style="left:158px;top:208px" width="16" height="16" viewBox="0 0 16 16"><path d="M9.2 7.5 V3.9 a2.7 2.7 0 0 1 5.4 0 V5.4" fill="none" stroke="#5c616c" stroke-width="2"/><rect x="0" y="7" width="14" height="8.8" rx="1.5" fill="#5c616c"/></svg>
<div class="t" id="r7n" style="left:208.20px;top:209.60px;font-size:13px;line-height:13px;font-weight:400;color:#3164a8;letter-spacing:0.220px;"><svg class="o1" viewBox="0 0 4.5 9.1" style="width:0.346em"><path d="M0.35 2.0 L3.40 0.55 M2.80 0 V9.1" stroke="currentColor" stroke-width="1.2" fill="none"/></svg>00-B-8</div>
<div class="t" id="r7s" style="left:408.20px;top:209.60px;font-size:13px;line-height:13px;font-weight:400;color:#222428;letter-spacing:0.150px;">active</div>
<div class="t" id="r7p" style="left:608.20px;top:209.60px;font-size:13px;line-height:13px;font-weight:400;color:#3164a8;letter-spacing:0.300px;">Plant F</div>
<div class="t" id="r7u" style="left:808.20px;top:209.60px;font-size:13px;line-height:13px;font-weight:400;color:#222428;letter-spacing:0.120px;">Kraken IM</div>
<div class="t" id="r7c" style="left:1008.20px;top:209.60px;font-size:13px;line-height:13px;font-weight:400;color:#3164a8;letter-spacing:0.050px;">AGS<svg class="o1" viewBox="0 0 4.5 9.1" style="width:0.346em"><path d="M0.35 2.0 L3.40 0.55 M2.80 0 V9.1" stroke="currentColor" stroke-width="1.2" fill="none"/></svg></div>
<div class="t" id="r7a" style="left:1208.20px;top:209.60px;font-size:13px;line-height:13px;font-weight:400;color:#3164a8;letter-spacing:0.050px;">ABC</div>
<div class="t" style="left:1535px;top:209.60px;width:90.6px;text-align:right;font-size:13px;line-height:13px;color:#3164a8"><svg class="o1" viewBox="0 0 4.5 9.1" style="width:0.346em"><path d="M0.35 2.0 L3.40 0.55 M2.80 0 V9.1" stroke="currentColor" stroke-width="1.2" fill="none"/></svg>23</div>
<div class="r" style="left:0;top:232px;width:1630px;height:28px;background:#f6f7f9"></div>
<div class="r" style="left:0;top:260px;width:1630px;height:1px;background:#d2d4d8"></div>
<div class="r" style="left:8px;top:238px;width:16px;height:16px;border:1.5px solid #6c6d70;border-radius:2px;background:rgba(255,255,255,0.35);box-sizing:border-box"></div>
<div class="r" style="left:58px;top:238.7px;width:16px;height:16px;border-radius:50%;background:#d9dad9"></div>
<svg class="r" style="left:113px;top:238.8px" width="14" height="15" viewBox="0 0 14 15"><path d="M7 0 L14 4.5 V11.8 L7 15 L0 11.8 V4.5 Z" fill="#5c616c"/><path d="M0.6 4.6 L7 7.9 L13.4 4.6 M7 7.9 V15" fill="none" stroke="#e4e6ea" stroke-width="1"/></svg>
<svg class="r" style="left:158px;top:237px" width="16" height="16" viewBox="0 0 16 16"><path d="M9.2 7.5 V3.9 a2.7 2.7 0 0 1 5.4 0 V5.4" fill="none" stroke="#5c616c" stroke-width="2"/><rect x="0" y="7" width="14" height="8.8" rx="1.5" fill="#5c616c"/></svg>
<div class="t" id="r8n" style="left:208.20px;top:238.60px;font-size:13px;line-height:13px;font-weight:400;color:#3164a8;letter-spacing:0.220px;"><svg class="o1" viewBox="0 0 4.5 9.1" style="width:0.346em"><path d="M0.35 2.0 L3.40 0.55 M2.80 0 V9.1" stroke="currentColor" stroke-width="1.2" fill="none"/></svg>00-C-<svg class="o1" viewBox="0 0 4.5 9.1" style="width:0.346em"><path d="M0.35 2.0 L3.40 0.55 M2.80 0 V9.1" stroke="currentColor" stroke-width="1.2" fill="none"/></svg>2</div>
<div class="t" id="r8s" style="left:408.20px;top:238.60px;font-size:13px;line-height:13px;font-weight:400;color:#222428;letter-spacing:0.150px;">active</div>
<div class="t" id="r8p" style="left:608.20px;top:238.60px;font-size:13px;line-height:13px;font-weight:400;color:#3164a8;letter-spacing:0.300px;">Plant F</div>
<div class="t" id="r8u" style="left:808.20px;top:238.60px;font-size:13px;line-height:13px;font-weight:400;color:#222428;letter-spacing:0.120px;">Kraken IM</div>
<div class="t" id="r8c" style="left:1008.20px;top:238.60px;font-size:13px;line-height:13px;font-weight:400;color:#3164a8;letter-spacing:0.050px;">A02</div>
<div class="t" id="r8a" style="left:1208.20px;top:238.60px;font-size:13px;line-height:13px;font-weight:400;color:#3164a8;letter-spacing:0.050px;">ABC</div>
<div class="t" style="left:1535px;top:238.60px;width:90.6px;text-align:right;font-size:13px;line-height:13px;color:#3164a8"><svg class="o1" viewBox="0 0 4.5 9.1" style="width:0.346em"><path d="M0.35 2.0 L3.40 0.55 M2.80 0 V9.1" stroke="currentColor" stroke-width="1.2" fill="none"/></svg>23</div>
<div class="r" style="left:0;top:261px;width:1630px;height:28px;background:#f1f2f4"></div>
<div class="r" style="left:0;top:289px;width:1630px;height:1px;background:#d2d4d8"></div>
<div class="r" style="left:8px;top:267px;width:16px;height:16px;border:1.5px solid #6c6d70;border-radius:2px;background:rgba(255,255,255,0.35);box-sizing:border-box"></div>
<div class="r" style="left:58px;top:267.7px;width:16px;height:16px;border-radius:50%;background:#d9dad9"></div>
<svg class="r" style="left:113px;top:267.8px" width="14" height="15" viewBox="0 0 14 15"><path d="M7 0 L14 4.5 V11.8 L7 15 L0 11.8 V4.5 Z" fill="#5c616c"/><path d="M0.6 4.6 L7 7.9 L13.4 4.6 M7 7.9 V15" fill="none" stroke="#e4e6ea" stroke-width="1"/></svg>
<svg class="r" style="left:158px;top:266px" width="16" height="16" viewBox="0 0 16 16"><path d="M9.2 7.5 V3.9 a2.7 2.7 0 0 1 5.4 0 V5.4" fill="none" stroke="#5c616c" stroke-width="2"/><rect x="0" y="7" width="14" height="8.8" rx="1.5" fill="#5c616c"/></svg>
<div class="t" id="r9n" style="left:208.20px;top:267.60px;font-size:13px;line-height:13px;font-weight:400;color:#3164a8;letter-spacing:0.220px;"><svg class="o1" viewBox="0 0 4.5 9.1" style="width:0.346em"><path d="M0.35 2.0 L3.40 0.55 M2.80 0 V9.1" stroke="currentColor" stroke-width="1.2" fill="none"/></svg>00-C-<svg class="o1" viewBox="0 0 4.5 9.1" style="width:0.346em"><path d="M0.35 2.0 L3.40 0.55 M2.80 0 V9.1" stroke="currentColor" stroke-width="1.2" fill="none"/></svg>2-B2</div>
<div class="t" id="r9s" style="left:408.20px;top:267.60px;font-size:13px;line-height:13px;font-weight:400;color:#222428;letter-spacing:0.150px;">active</div>
<div class="t" id="r9p" style="left:608.20px;top:267.60px;font-size:13px;line-height:13px;font-weight:400;color:#3164a8;letter-spacing:0.300px;">Plant F</div>
<div class="t" id="r9u" style="left:808.20px;top:267.60px;font-size:13px;line-height:13px;font-weight:400;color:#222428;letter-spacing:0.120px;">Kraken IM</div>
<div class="t" id="r9c" style="left:1008.20px;top:267.60px;font-size:13px;line-height:13px;font-weight:400;color:#3164a8;letter-spacing:0.050px;">TRC<svg class="o1" viewBox="0 0 4.5 9.1" style="width:0.346em"><path d="M0.35 2.0 L3.40 0.55 M2.80 0 V9.1" stroke="currentColor" stroke-width="1.2" fill="none"/></svg></div>
<div class="t" id="r9a" style="left:1208.20px;top:267.60px;font-size:13px;line-height:13px;font-weight:400;color:#3164a8;letter-spacing:0.050px;">ABC</div>
<div class="t" style="left:1535px;top:267.60px;width:90.6px;text-align:right;font-size:13px;line-height:13px;color:#3164a8"><svg class="o1" viewBox="0 0 4.5 9.1" style="width:0.346em"><path d="M0.35 2.0 L3.40 0.55 M2.80 0 V9.1" stroke="currentColor" stroke-width="1.2" fill="none"/></svg>23</div>
<div class="r" style="left:0;top:290px;width:1630px;height:28px;background:#f6f7f9"></div>
<div class="r" style="left:0;top:318px;width:1630px;height:1px;background:#d2d4d8"></div>
<div class="r" style="left:8px;top:296px;width:16px;height:16px;border:1.5px solid #6c6d70;border-radius:2px;background:rgba(255,255,255,0.35);box-sizing:border-box"></div>
<div class="r" style="left:58px;top:296.7px;width:16px;height:16px;border-radius:50%;background:#d9dad9"></div>
<svg class="r" style="left:113px;top:296.8px" width="14" height="15" viewBox="0 0 14 15"><path d="M7 0 L14 4.5 V11.8 L7 15 L0 11.8 V4.5 Z" fill="#5c616c"/><path d="M0.6 4.6 L7 7.9 L13.4 4.6 M7 7.9 V15" fill="none" stroke="#e4e6ea" stroke-width="1"/></svg>
<svg class="r" style="left:158px;top:295px" width="16" height="16" viewBox="0 0 16 16"><path d="M9.2 7.5 V3.9 a2.7 2.7 0 0 1 5.4 0 V5.4" fill="none" stroke="#5c616c" stroke-width="2"/><rect x="0" y="7" width="14" height="8.8" rx="1.5" fill="#5c616c"/></svg>
<div class="t" id="r10n" style="left:208.20px;top:296.60px;font-size:13px;line-height:13px;font-weight:400;color:#3164a8;letter-spacing:0.220px;"><svg class="o1" viewBox="0 0 4.5 9.1" style="width:0.346em"><path d="M0.35 2.0 L3.40 0.55 M2.80 0 V9.1" stroke="currentColor" stroke-width="1.2" fill="none"/></svg>00-C-<svg class="o1" viewBox="0 0 4.5 9.1" style="width:0.346em"><path d="M0.35 2.0 L3.40 0.55 M2.80 0 V9.1" stroke="currentColor" stroke-width="1.2" fill="none"/></svg>3</div>
<div class="t" id="r10s" style="left:408.20px;top:296.60px;font-size:13px;line-height:13px;font-weight:400;color:#222428;letter-spacing:0.150px;">active</div>
<div class="t" id="r10p" style="left:608.20px;top:296.60px;font-size:13px;line-height:13px;font-weight:400;color:#3164a8;letter-spacing:0.300px;">Plant F</div>
<div class="t" id="r10u" style="left:808.20px;top:296.60px;font-size:13px;line-height:13px;font-weight:400;color:#222428;letter-spacing:0.120px;">Kraken IM</div>
<div class="t" id="r10c" style="left:1008.20px;top:296.60px;font-size:13px;line-height:13px;font-weight:400;color:#3164a8;letter-spacing:0.050px;">T8C2</div>
<div class="t" id="r10a" style="left:1208.20px;top:296.60px;font-size:13px;line-height:13px;font-weight:400;color:#3164a8;letter-spacing:0.050px;">ABC</div>
<div class="t" style="left:1535px;top:296.60px;width:90.6px;text-align:right;font-size:13px;line-height:13px;color:#3164a8"><svg class="o1" viewBox="0 0 4.5 9.1" style="width:0.346em"><path d="M0.35 2.0 L3.40 0.55 M2.80 0 V9.1" stroke="currentColor" stroke-width="1.2" fill="none"/></svg>23</div>
<div class="r" style="left:0;top:319px;width:1630px;height:28px;background:#f1f2f4"></div>
<div class="r" style="left:0;top:347px;width:1630px;height:1px;background:#d2d4d8"></div>
<div class="r" style="left:8px;top:325px;width:16px;height:16px;border:1.5px solid #6c6d70;border-radius:2px;background:rgba(255,255,255,0.35);box-sizing:border-box"></div>
<div class="r" style="left:58px;top:325.7px;width:16px;height:16px;border-radius:50%;background:#d9dad9"></div>
<svg class="r" style="left:113px;top:325.8px" width="14" height="15" viewBox="0 0 14 15"><path d="M7 0 L14 4.5 V11.8 L7 15 L0 11.8 V4.5 Z" fill="#5c616c"/><path d="M0.6 4.6 L7 7.9 L13.4 4.6 M7 7.9 V15" fill="none" stroke="#e4e6ea" stroke-width="1"/></svg>
<svg class="r" style="left:158px;top:324px" width="16" height="16" viewBox="0 0 16 16"><path d="M9.2 7.5 V3.9 a2.7 2.7 0 0 1 5.4 0 V5.4" fill="none" stroke="#5c616c" stroke-width="2"/><rect x="0" y="7" width="14" height="8.8" rx="1.5" fill="#5c616c"/></svg>
<div class="t" id="r11n" style="left:208.20px;top:325.60px;font-size:13px;line-height:13px;font-weight:400;color:#3164a8;letter-spacing:0.220px;"><svg class="o1" viewBox="0 0 4.5 9.1" style="width:0.346em"><path d="M0.35 2.0 L3.40 0.55 M2.80 0 V9.1" stroke="currentColor" stroke-width="1.2" fill="none"/></svg>00-C-<svg class="o1" viewBox="0 0 4.5 9.1" style="width:0.346em"><path d="M0.35 2.0 L3.40 0.55 M2.80 0 V9.1" stroke="currentColor" stroke-width="1.2" fill="none"/></svg>5</div>
<div class="t" id="r11s" style="left:408.20px;top:325.60px;font-size:13px;line-height:13px;font-weight:400;color:#222428;letter-spacing:0.150px;">active</div>
<div class="t" id="r11p" style="left:608.20px;top:325.60px;font-size:13px;line-height:13px;font-weight:400;color:#3164a8;letter-spacing:0.300px;">Plant F</div>
<div class="t" id="r11u" style="left:808.20px;top:325.60px;font-size:13px;line-height:13px;font-weight:400;color:#222428;letter-spacing:0.120px;">Kraken IM</div>
<div class="t" id="r11c" style="left:1008.20px;top:325.60px;font-size:13px;line-height:13px;font-weight:400;color:#3164a8;letter-spacing:0.050px;">PPIG</div>
<div class="t" id="r11a" style="left:1208.20px;top:325.60px;font-size:13px;line-height:13px;font-weight:400;color:#3164a8;letter-spacing:0.050px;">ABC</div>
<div class="t" style="left:1535px;top:325.60px;width:90.6px;text-align:right;font-size:13px;line-height:13px;color:#3164a8"><svg class="o1" viewBox="0 0 4.5 9.1" style="width:0.346em"><path d="M0.35 2.0 L3.40 0.55 M2.80 0 V9.1" stroke="currentColor" stroke-width="1.2" fill="none"/></svg>23</div>
<div class="r" style="left:0;top:348px;width:1630px;height:28px;background:#f6f7f9"></div>
<div class="r" style="left:0;top:376px;width:1630px;height:1px;background:#d2d4d8"></div>
<div class="r" style="left:8px;top:354px;width:16px;height:16px;border:1.5px solid #6c6d70;border-radius:2px;background:rgba(255,255,255,0.35);box-sizing:border-box"></div>
<div class="r" style="left:58px;top:354.7px;width:16px;height:16px;border-radius:50%;background:#d9dad9"></div>
<svg class="r" style="left:113px;top:354.8px" width="14" height="15" viewBox="0 0 14 15"><path d="M7 0 L14 4.5 V11.8 L7 15 L0 11.8 V4.5 Z" fill="#5c616c"/><path d="M0.6 4.6 L7 7.9 L13.4 4.6 M7 7.9 V15" fill="none" stroke="#e4e6ea" stroke-width="1"/></svg>
<svg class="r" style="left:158px;top:353px" width="16" height="16" viewBox="0 0 16 16"><path d="M9.2 7.5 V3.9 a2.7 2.7 0 0 1 5.4 0 V5.4" fill="none" stroke="#5c616c" stroke-width="2"/><rect x="0" y="7" width="14" height="8.8" rx="1.5" fill="#5c616c"/></svg>
<div class="t" id="r12n" style="left:208.20px;top:354.60px;font-size:13px;line-height:13px;font-weight:400;color:#3164a8;letter-spacing:0.220px;"><svg class="o1" viewBox="0 0 4.5 9.1" style="width:0.346em"><path d="M0.35 2.0 L3.40 0.55 M2.80 0 V9.1" stroke="currentColor" stroke-width="1.2" fill="none"/></svg>00-C-<svg class="o1" viewBox="0 0 4.5 9.1" style="width:0.346em"><path d="M0.35 2.0 L3.40 0.55 M2.80 0 V9.1" stroke="currentColor" stroke-width="1.2" fill="none"/></svg>6</div>
<div class="t" id="r12s" style="left:408.20px;top:354.60px;font-size:13px;line-height:13px;font-weight:400;color:#222428;letter-spacing:0.150px;">active</div>
<div class="t" id="r12p" style="left:608.20px;top:354.60px;font-size:13px;line-height:13px;font-weight:400;color:#3164a8;letter-spacing:0.300px;">Plant F</div>
<div class="t" id="r12u" style="left:808.20px;top:354.60px;font-size:13px;line-height:13px;font-weight:400;color:#222428;letter-spacing:0.120px;">Kraken IM</div>
<div class="t" id="r12c" style="left:1008.20px;top:354.60px;font-size:13px;line-height:13px;font-weight:400;color:#3164a8;letter-spacing:0.050px;">CYDG</div>
<div class="t" id="r12a" style="left:1208.20px;top:354.60px;font-size:13px;line-height:13px;font-weight:400;color:#3164a8;letter-spacing:0.050px;">ABC</div>
<div class="t" style="left:1535px;top:354.60px;width:90.6px;text-align:right;font-size:13px;line-height:13px;color:#3164a8"><svg class="o1" viewBox="0 0 4.5 9.1" style="width:0.346em"><path d="M0.35 2.0 L3.40 0.55 M2.80 0 V9.1" stroke="currentColor" stroke-width="1.2" fill="none"/></svg>23</div>
<div class="r" style="left:0;top:377px;width:1630px;height:28px;background:#f1f2f4"></div>
<div class="r" style="left:0;top:405px;width:1630px;height:1px;background:#d2d4d8"></div>
<div class="r" style="left:8px;top:383px;width:16px;height:16px;border:1.5px solid #6c6d70;border-radius:2px;background:rgba(255,255,255,0.35);box-sizing:border-box"></div>
<div class="r" style="left:58px;top:383.7px;width:16px;height:16px;border-radius:50%;background:#d9dad9"></div>
<svg class="r" style="left:113px;top:383.8px" width="14" height="15" viewBox="0 0 14 15"><path d="M7 0 L14 4.5 V11.8 L7 15 L0 11.8 V4.5 Z" fill="#9a9ea5"/><path d="M0.6 4.6 L7 7.9 L13.4 4.6 M7 7.9 V15" fill="none" stroke="#e4e6ea" stroke-width="1"/></svg>
<svg class="r" style="left:158px;top:382px" width="16" height="16" viewBox="0 0 16 16"><path d="M9.2 7.5 V3.9 a2.7 2.7 0 0 1 5.4 0 V5.4" fill="none" stroke="#5c616c" stroke-width="2"/><rect x="0" y="7" width="14" height="8.8" rx="1.5" fill="#5c616c"/></svg>
<div class="t" id="r13n" style="left:208.20px;top:383.60px;font-size:13px;line-height:13px;font-weight:400;color:#3164a8;letter-spacing:0.220px;"><svg class="o1" viewBox="0 0 4.5 9.1" style="width:0.346em"><path d="M0.35 2.0 L3.40 0.55 M2.80 0 V9.1" stroke="currentColor" stroke-width="1.2" fill="none"/></svg>00-GT-<svg class="o1" viewBox="0 0 4.5 9.1" style="width:0.346em"><path d="M0.35 2.0 L3.40 0.55 M2.80 0 V9.1" stroke="currentColor" stroke-width="1.2" fill="none"/></svg></div>
<div class="t" id="r13s" style="left:408.20px;top:383.60px;font-size:13px;line-height:13px;font-weight:400;color:#222428;letter-spacing:0.150px;">active</div>
<div class="t" id="r13p" style="left:608.20px;top:383.60px;font-size:13px;line-height:13px;font-weight:400;color:#3164a8;letter-spacing:0.300px;">Plant F</div>
<div class="t" id="r13u" style="left:808.20px;top:383.60px;font-size:13px;line-height:13px;font-weight:400;color:#222428;letter-spacing:0.120px;">Kraken IM</div>
<div class="t" id="r13c" style="left:1008.20px;top:383.60px;font-size:13px;line-height:13px;font-weight:400;color:#3164a8;letter-spacing:0.050px;">CYDG</div>
<div class="t" id="r13a" style="left:1208.20px;top:383.60px;font-size:13px;line-height:13px;font-weight:400;color:#3164a8;letter-spacing:0.050px;">ABC</div>
<div class="t" style="left:1535px;top:383.60px;width:90.6px;text-align:right;font-size:13px;line-height:13px;color:#3164a8"><svg class="o1" viewBox="0 0 4.5 9.1" style="width:0.346em"><path d="M0.35 2.0 L3.40 0.55 M2.80 0 V9.1" stroke="currentColor" stroke-width="1.2" fill="none"/></svg>23</div>
<div class="r" style="left:0;top:406px;width:1630px;height:28px;background:#f6f7f9"></div>
<div class="r" style="left:0;top:434px;width:1630px;height:1px;background:#d2d4d8"></div>
<div class="r" style="left:8px;top:412px;width:16px;height:16px;border:1.5px solid #6c6d70;border-radius:2px;background:rgba(255,255,255,0.35);box-sizing:border-box"></div>
<div class="r" style="left:58px;top:412.7px;width:16px;height:16px;border-radius:50%;background:#d9dad9"></div>
<svg class="r" style="left:113px;top:412.8px" width="14" height="15" viewBox="0 0 14 15"><path d="M7 0 L14 4.5 V11.8 L7 15 L0 11.8 V4.5 Z" fill="#5c616c"/><path d="M0.6 4.6 L7 7.9 L13.4 4.6 M7 7.9 V15" fill="none" stroke="#e4e6ea" stroke-width="1"/></svg>
<svg class="r" style="left:158px;top:411px" width="16" height="16" viewBox="0 0 16 16"><path d="M9.2 7.5 V3.9 a2.7 2.7 0 0 1 5.4 0 V5.4" fill="none" stroke="#5c616c" stroke-width="2"/><rect x="0" y="7" width="14" height="8.8" rx="1.5" fill="#5c616c"/></svg>
<div class="t" id="r14n" style="left:208.20px;top:412.60px;font-size:13px;line-height:13px;font-weight:400;color:#3164a8;letter-spacing:0.220px;"><svg class="o1" viewBox="0 0 4.5 9.1" style="width:0.346em"><path d="M0.35 2.0 L3.40 0.55 M2.80 0 V9.1" stroke="currentColor" stroke-width="1.2" fill="none"/></svg>50-A-3</div>
<div class="t" id="r14s" style="left:408.20px;top:412.60px;font-size:13px;line-height:13px;font-weight:400;color:#222428;letter-spacing:0.150px;">active</div>
<div class="t" id="r14p" style="left:608.20px;top:412.60px;font-size:13px;line-height:13px;font-weight:400;color:#3164a8;letter-spacing:0.300px;">Plant F</div>
<div class="t" id="r14u" style="left:808.20px;top:412.60px;font-size:13px;line-height:13px;font-weight:400;color:#222428;letter-spacing:0.120px;">Kraken IM</div>
<div class="t" id="r14c" style="left:1008.20px;top:412.60px;font-size:13px;line-height:13px;font-weight:400;color:#3164a8;letter-spacing:0.050px;">A02</div>
<div class="t" id="r14a" style="left:1208.20px;top:412.60px;font-size:13px;line-height:13px;font-weight:400;color:#3164a8;letter-spacing:0.050px;">ABC</div>
<div class="t" style="left:1535px;top:412.60px;width:90.6px;text-align:right;font-size:13px;line-height:13px;color:#3164a8"><svg class="o1" viewBox="0 0 4.5 9.1" style="width:0.346em"><path d="M0.35 2.0 L3.40 0.55 M2.80 0 V9.1" stroke="currentColor" stroke-width="1.2" fill="none"/></svg>23</div>
<div class="r" style="left:0;top:435px;width:1630px;height:28px;background:#f1f2f4"></div>
<div class="r" style="left:0;top:463px;width:1630px;height:1px;background:#d2d4d8"></div>
<div class="r" style="left:8px;top:441px;width:16px;height:16px;border:1.5px solid #6c6d70;border-radius:2px;background:rgba(255,255,255,0.35);box-sizing:border-box"></div>
<div class="r" style="left:58px;top:441.7px;width:16px;height:16px;border-radius:50%;background:#d9dad9"></div>
<svg class="r" style="left:113px;top:441.8px" width="14" height="15" viewBox="0 0 14 15"><path d="M7 0 L14 4.5 V11.8 L7 15 L0 11.8 V4.5 Z" fill="#5c616c"/><path d="M0.6 4.6 L7 7.9 L13.4 4.6 M7 7.9 V15" fill="none" stroke="#e4e6ea" stroke-width="1"/></svg>
<svg class="r" style="left:158px;top:440px" width="16" height="16" viewBox="0 0 16 16"><path d="M9.2 7.5 V3.9 a2.7 2.7 0 0 1 5.4 0 V5.4" fill="none" stroke="#5c616c" stroke-width="2"/><rect x="0" y="7" width="14" height="8.8" rx="1.5" fill="#5c616c"/></svg>
<div class="t" id="r15n" style="left:208.20px;top:441.60px;font-size:13px;line-height:13px;font-weight:400;color:#3164a8;letter-spacing:0.220px;"><svg class="o1" viewBox="0 0 4.5 9.1" style="width:0.346em"><path d="M0.35 2.0 L3.40 0.55 M2.80 0 V9.1" stroke="currentColor" stroke-width="1.2" fill="none"/></svg>50-A-3-B<svg class="o1" viewBox="0 0 4.5 9.1" style="width:0.346em"><path d="M0.35 2.0 L3.40 0.55 M2.80 0 V9.1" stroke="currentColor" stroke-width="1.2" fill="none"/></svg></div>
<div class="t" id="r15s" style="left:408.20px;top:441.60px;font-size:13px;line-height:13px;font-weight:400;color:#222428;letter-spacing:0.150px;">active</div>
<div class="t" id="r15p" style="left:608.20px;top:441.60px;font-size:13px;line-height:13px;font-weight:400;color:#3164a8;letter-spacing:0.300px;">Plant F</div>
<div class="t" id="r15u" style="left:808.20px;top:441.60px;font-size:13px;line-height:13px;font-weight:400;color:#222428;letter-spacing:0.120px;">Kraken IM</div>
<div class="t" id="r15c" style="left:1008.20px;top:441.60px;font-size:13px;line-height:13px;font-weight:400;color:#3164a8;letter-spacing:0.050px;">SPLG</div>
<div class="t" id="r15a" style="left:1208.20px;top:441.60px;font-size:13px;line-height:13px;font-weight:400;color:#3164a8;letter-spacing:0.050px;">ABC</div>
<div class="t" style="left:1535px;top:441.60px;width:90.6px;text-align:right;font-size:13px;line-height:13px;color:#3164a8"><svg class="o1" viewBox="0 0 4.5 9.1" style="width:0.346em"><path d="M0.35 2.0 L3.40 0.55 M2.80 0 V9.1" stroke="currentColor" stroke-width="1.2" fill="none"/></svg>23</div>
<div class="r" style="left:0;top:464px;width:1630px;height:28px;background:#f6f7f9"></div>
<div class="r" style="left:0;top:492px;width:1630px;height:1px;background:#d2d4d8"></div>
<div class="r" style="left:8px;top:470px;width:16px;height:16px;border:1.5px solid #6c6d70;border-radius:2px;background:rgba(255,255,255,0.35);box-sizing:border-box"></div>
<div class="r" style="left:58px;top:470.7px;width:16px;height:16px;border-radius:50%;background:#d9dad9"></div>
<svg class="r" style="left:113px;top:470.8px" width="14" height="15" viewBox="0 0 14 15"><path d="M7 0 L14 4.5 V11.8 L7 15 L0 11.8 V4.5 Z" fill="#5c616c"/><path d="M0.6 4.6 L7 7.9 L13.4 4.6 M7 7.9 V15" fill="none" stroke="#e4e6ea" stroke-width="1"/></svg>
<svg class="r" style="left:158px;top:469px" width="16" height="16" viewBox="0 0 16 16"><path d="M9.2 7.5 V3.9 a2.7 2.7 0 0 1 5.4 0 V5.4" fill="none" stroke="#5c616c" stroke-width="2"/><rect x="0" y="7" width="14" height="8.8" rx="1.5" fill="#5c616c"/></svg>
<div class="t" id="r16n" style="left:208.20px;top:470.60px;font-size:13px;line-height:13px;font-weight:400;color:#3164a8;letter-spacing:0.220px;"><svg class="o1" viewBox="0 0 4.5 9.1" style="width:0.346em"><path d="M0.35 2.0 L3.40 0.55 M2.80 0 V9.1" stroke="currentColor" stroke-width="1.2" fill="none"/></svg>50-A-57</div>
<div class="t" id="r16s" style="left:408.20px;top:470.60px;font-size:13px;line-height:13px;font-weight:400;color:#222428;letter-spacing:0.150px;">active</div>
<div class="t" id="r16p" style="left:608.20px;top:470.60px;font-size:13px;line-height:13px;font-weight:400;color:#3164a8;letter-spacing:0.300px;">Plant F</div>
<div class="t" id="r16u" style="left:808.20px;top:470.60px;font-size:13px;line-height:13px;font-weight:400;color:#222428;letter-spacing:0.120px;">Kraken IM</div>
<div class="t" id="r16c" style="left:1008.20px;top:470.60px;font-size:13px;line-height:13px;font-weight:400;color:#3164a8;letter-spacing:0.050px;">SPLG</div>
<div class="t" id="r16a" style="left:1208.20px;top:470.60px;font-size:13px;line-height:13px;font-weight:400;color:#3164a8;letter-spacing:0.050px;">ABC</div>
<div class="t" style="left:1535px;top:470.60px;width:90.6px;text-align:right;font-size:13px;line-height:13px;color:#3164a8"><svg class="o1" viewBox="0 0 4.5 9.1" style="width:0.346em"><path d="M0.35 2.0 L3.40 0.55 M2.80 0 V9.1" stroke="currentColor" stroke-width="1.2" fill="none"/></svg>23</div>
<div class="r" style="left:0;top:493px;width:1630px;height:28px;background:#f1f2f4"></div>
<div class="r" style="left:0;top:521px;width:1630px;height:1px;background:#d2d4d8"></div>
<div class="r" style="left:8px;top:499px;width:16px;height:16px;border:1.5px solid #6c6d70;border-radius:2px;background:rgba(255,255,255,0.35);box-sizing:border-box"></div>
<div class="r" style="left:58px;top:499.7px;width:16px;height:16px;border-radius:50%;background:#d9dad9"></div>
<svg class="r" style="left:113px;top:499.8px" width="14" height="15" viewBox="0 0 14 15"><path d="M7 0 L14 4.5 V11.8 L7 15 L0 11.8 V4.5 Z" fill="#5c616c"/><path d="M0.6 4.6 L7 7.9 L13.4 4.6 M7 7.9 V15" fill="none" stroke="#e4e6ea" stroke-width="1"/></svg>
<svg class="r" style="left:158px;top:498px" width="16" height="16" viewBox="0 0 16 16"><path d="M9.2 7.5 V3.9 a2.7 2.7 0 0 1 5.4 0 V5.4" fill="none" stroke="#5c616c" stroke-width="2"/><rect x="0" y="7" width="14" height="8.8" rx="1.5" fill="#5c616c"/></svg>
<div class="t" id="r17n" style="left:208.20px;top:499.60px;font-size:13px;line-height:13px;font-weight:400;color:#3164a8;letter-spacing:0.220px;"><svg class="o1" viewBox="0 0 4.5 9.1" style="width:0.346em"><path d="M0.35 2.0 L3.40 0.55 M2.80 0 V9.1" stroke="currentColor" stroke-width="1.2" fill="none"/></svg>50-B-6</div>
<div class="t" id="r17s" style="left:408.20px;top:499.60px;font-size:13px;line-height:13px;font-weight:400;color:#222428;letter-spacing:0.150px;">active</div>
<div class="t" id="r17p" style="left:608.20px;top:499.60px;font-size:13px;line-height:13px;font-weight:400;color:#3164a8;letter-spacing:0.300px;">Plant F</div>
<div class="t" id="r17u" style="left:808.20px;top:499.60px;font-size:13px;line-height:13px;font-weight:400;color:#222428;letter-spacing:0.120px;">Kraken IM</div>
<div class="t" id="r17c" style="left:1008.20px;top:499.60px;font-size:13px;line-height:13px;font-weight:400;color:#3164a8;letter-spacing:0.050px;">TAAG</div>
<div class="t" id="r17a" style="left:1208.20px;top:499.60px;font-size:13px;line-height:13px;font-weight:400;color:#3164a8;letter-spacing:0.050px;">ABC</div>
<div class="t" style="left:1535px;top:499.60px;width:90.6px;text-align:right;font-size:13px;line-height:13px;color:#3164a8"><svg class="o1" viewBox="0 0 4.5 9.1" style="width:0.346em"><path d="M0.35 2.0 L3.40 0.55 M2.80 0 V9.1" stroke="currentColor" stroke-width="1.2" fill="none"/></svg>23</div>
<div class="r" style="left:0;top:522px;width:1630px;height:28px;background:#f6f7f9"></div>
<div class="r" style="left:0;top:550px;width:1630px;height:1px;background:#d2d4d8"></div>
<div class="r" style="left:8px;top:528px;width:16px;height:16px;border:1.5px solid #6c6d70;border-radius:2px;background:rgba(255,255,255,0.35);box-sizing:border-box"></div>
<div class="r" style="left:58px;top:528.7px;width:16px;height:16px;border-radius:50%;background:#d9dad9"></div>
<svg class="r" style="left:113px;top:528.8px" width="14" height="15" viewBox="0 0 14 15"><path d="M7 0 L14 4.5 V11.8 L7 15 L0 11.8 V4.5 Z" fill="#5c616c"/><path d="M0.6 4.6 L7 7.9 L13.4 4.6 M7 7.9 V15" fill="none" stroke="#e4e6ea" stroke-width="1"/></svg>
<svg class="r" style="left:158px;top:527px" width="16" height="16" viewBox="0 0 16 16"><path d="M9.2 7.5 V3.9 a2.7 2.7 0 0 1 5.4 0 V5.4" fill="none" stroke="#5c616c" stroke-width="2"/><rect x="0" y="7" width="14" height="8.8" rx="1.5" fill="#5c616c"/></svg>
<div class="t" id="r18n" style="left:208.20px;top:528.60px;font-size:13px;line-height:13px;font-weight:400;color:#3164a8;letter-spacing:0.220px;">200-B-4</div>
<div class="t" id="r18s" style="left:408.20px;top:528.60px;font-size:13px;line-height:13px;font-weight:400;color:#222428;letter-spacing:0.150px;">active</div>
<div class="t" id="r18p" style="left:608.20px;top:528.60px;font-size:13px;line-height:13px;font-weight:400;color:#3164a8;letter-spacing:0.300px;">Plant F</div>
<div class="t" id="r18u" style="left:808.20px;top:528.60px;font-size:13px;line-height:13px;font-weight:400;color:#222428;letter-spacing:0.120px;">Kraken IM</div>
<div class="t" id="r18c" style="left:1008.20px;top:528.60px;font-size:13px;line-height:13px;font-weight:400;color:#3164a8;letter-spacing:0.050px;">B0<svg class="o1" viewBox="0 0 4.5 9.1" style="width:0.346em"><path d="M0.35 2.0 L3.40 0.55 M2.80 0 V9.1" stroke="currentColor" stroke-width="1.2" fill="none"/></svg></div>
<div class="t" id="r18a" style="left:1208.20px;top:528.60px;font-size:13px;line-height:13px;font-weight:400;color:#3164a8;letter-spacing:0.050px;">ABC</div>
<div class="t" style="left:1535px;top:528.60px;width:90.6px;text-align:right;font-size:13px;line-height:13px;color:#3164a8"><svg class="o1" viewBox="0 0 4.5 9.1" style="width:0.346em"><path d="M0.35 2.0 L3.40 0.55 M2.80 0 V9.1" stroke="currentColor" stroke-width="1.2" fill="none"/></svg>23</div>
</div>
<div class="r" style="left:1695px;top:241px;width:25px;height:631px;background:#eceef1;border-left:1px solid #d1d4d8;box-sizing:border-box"></div>
<div class="r" style="left:1696px;top:256px;width:24px;height:1px;background:#d3d6da"></div>
<div class="r" style="left:1696px;top:355px;width:24px;height:1px;background:#d3d6da"></div>
<div class="r" style="left:1696px;top:436px;width:24px;height:1px;background:#d3d6da"></div>
<div class="r" style="left:1696px;top:257px;width:24px;height:98px;background:#eef0f2"></div>
<div class="r" style="left:1696px;top:356px;width:24px;height:80px;background:#eef0f2"></div>
<svg class="r" style="left:1702px;top:271px;" width="12" height="11" viewBox="0 0 12 11"><path d="M1.5 0.5 V10.5 M4.5 0.5 V10.5 M7.5 0.5 V10.5 M10.5 0.5 V10.5" stroke="#3a3e45" stroke-width="1.2"/></svg>
<div class="t" style="left:1701px;top:289px;font-size:13px;line-height:14px;color:#3a3e45;writing-mode:vertical-rl">Columns</div>
<svg class="r" style="left:1702px;top:369px;" width="12" height="12" viewBox="0 0 12 12"><path d="M1 1 H11 L7 5.5 V10.5 L5 9.5 V5.5 Z" fill="none" stroke="#3a3e45" stroke-width="1.4" stroke-linejoin="round"/></svg>
<div class="t" style="left:1701px;top:386px;font-size:13px;line-height:14px;color:#3a3e45;writing-mode:vertical-rl">Filters</div>
<div class="t" id="results" style="left:64.30px;top:888.10px;font-size:15px;line-height:15px;font-weight:700;color:#1f2226;letter-spacing:-0.379px;"><span style="color:#3a3c40"><svg class="o1" viewBox="0 0 4.6 9.1" style="width:0.354em"><path d="M0.35 2.0 L3.82 0.55 M2.90 0 V9.1" stroke="currentColor" stroke-width="1.85" fill="none"/></svg><svg class="o1" viewBox="0 0 4.6 9.1" style="width:0.354em"><path d="M0.35 2.0 L3.82 0.55 M2.90 0 V9.1" stroke="currentColor" stroke-width="1.85" fill="none"/></svg><svg class="o1" viewBox="0 0 4.6 9.1" style="width:0.354em"><path d="M0.35 2.0 L3.82 0.55 M2.90 0 V9.1" stroke="currentColor" stroke-width="1.85" fill="none"/></svg></span> results</div>
<svg class="r" style="left:0px;top:0px;" width="300" height="943" viewBox="0 0 300 943"><g fill="none" stroke="#1f5db0" stroke-width="1.7">
<path d="M147.3 896.2 A6.6 6.6 0 1 0 149.3 891"/>
<path d="M185.9 895.6 A6.2 6.2 0 0 1 196.6 891.2"/>
<path d="M198.1 896.3 A6.2 6.2 0 0 1 187.4 900.6"/>
<path d="M223.5 889.5 L228.5 894.5 M236.5 889.5 L231.5 894.5 M223.5 902.5 L228.5 897.5 M236.5 902.5 L231.5 897.5"/>
</g><g fill="#1f5db0">
<path d="M146.2 887.8 V894 H152.4Z"/>
<path d="M198.8 888.6 V894.2 H193.2Z"/>
<path d="M185.2 903.2 V897.6 H190.8Z"/>
<path d="M221.8 887.8 H227.6 L221.8 893.6Z M238.2 887.8 H232.4 L238.2 893.6Z M221.8 904 H227.6 L221.8 898.2Z M238.2 904 H232.4 L238.2 898.2Z"/>
</g></svg>
<div class="r" style="left:1530px;top:907px;width:238px;height:40px;background:#1d2129;border-radius:6px 6px 0 0"></div>
<svg class="r" style="left:0px;top:0px;" width="1785" height="943" viewBox="0 0 1785 943"><g transform="translate(-131.6 890.4)"><path d="M1674.6 29.6 H1683.6 Q1684.8 29.6 1684.8 30.8 V38.7 Q1684.8 39.9 1683.6 39.9 H1679.2 L1675.6 42.9 V39.9 H1674.6 Q1673.4 39.9 1673.4 38.7 V30.8 Q1673.4 29.6 1674.6 29.6Z" fill="#fff"/><path d="M1680 26.9 H1688.8 Q1690 26.9 1690 28.1 V34.9 Q1690 36.1 1688.8 36.1 V38.9 L1685.6 36.1 H1680 Q1678.8 36.1 1678.8 34.9 V28.1 Q1678.8 26.9 1680 26.9Z" fill="#fff" stroke="#1d2129" stroke-width="1.3"/></g></svg>
<div class="t" id="hai" style="left:1566.80px;top:917.20px;font-size:15px;line-height:15px;font-weight:400;color:#ffffff;letter-spacing:0.356px;">Halcyon AI</div>
<svg class="r" style="left:1741px;top:921px;" width="14" height="9" viewBox="0 0 14 9"><path d="M2 7.2 L7 2.4 L12 7.2" fill="none" stroke="#fff" stroke-width="1.8"/></svg>
</body></html>
